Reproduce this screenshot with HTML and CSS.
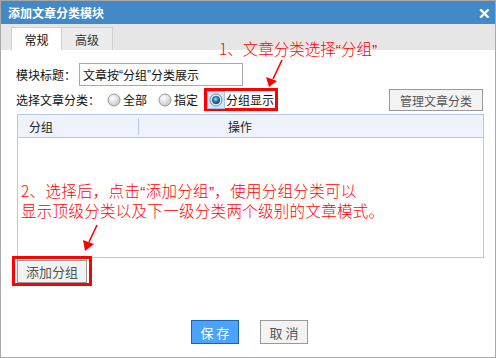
FILE: index.html
```html
<!DOCTYPE html>
<html lang="zh">
<head>
<meta charset="utf-8">
<title>添加文章分类模块</title>
<link rel="stylesheet" href="styles.css">
</head>
<body>
<div class="dialog">
  <div class="titlebar">
    <span class="title">添加文章分类模块</span>
    <span class="close">✕</span>
  </div>
  <div class="tabs">
    <div class="tab active">常规</div>
    <div class="tab">高级</div>
  </div>
  <div class="content">
    <div class="row row-title">
      <span class="label">模块标题：</span>
      <div class="input">文章按<span class="q">“</span>分组<span class="q">”</span>分类展示</div>
    </div>
    <div class="row row-cat">
      <span class="label">选择文章分类：</span>
      <span class="radio"><svg width="14" height="14" viewBox="0 0 14 14"><defs><radialGradient id="rg" cx="0.4" cy="0.35" r="0.7"><stop offset="0" stop-color="#ffffff"/><stop offset="1" stop-color="#c4c4c4"/></radialGradient></defs><circle cx="7" cy="7" r="6" fill="url(#rg)" stroke="#9a9a9a"/></svg>全部</span>
      <span class="radio"><svg width="14" height="14" viewBox="0 0 14 14"><circle cx="7" cy="7" r="6" fill="url(#rg)" stroke="#9a9a9a"/></svg>指定</span>
      <span class="mark-box radio-box"><span class="radio checked"><span class="focus"><svg width="14" height="14" viewBox="0 0 14 14"><defs><radialGradient id="rb" cx="0.45" cy="0.4" r="0.6"><stop offset="0" stop-color="#bfe6ff"/><stop offset="0.45" stop-color="#2f83c4"/><stop offset="1" stop-color="#0b3f6e"/></radialGradient></defs><circle cx="7" cy="7" r="6" fill="#dfe9f3" stroke="#6b8fb0"/><circle cx="7" cy="7" r="4" fill="url(#rb)"/></svg></span>分组显示</span></span>
      <span class="spacer"></span>
      <span class="btn btn-gray btn-manage">管理文章分类</span>
    </div>
    <div class="grid">
      <div class="grid-head">
        <span class="col col1">分组</span>
        <span class="divider"></span>
        <span class="col col2">操作</span>
      </div>
      <div class="grid-body"></div>
    </div>
    <div class="mark-box add-box"><span class="btn btn-gray btn-add">添加分组</span></div>
    <div class="footer">
      <span class="btn btn-blue">保 存</span>
      <span class="btn btn-gray btn-cancel">取 消</span>
    </div>
  </div>

  <div class="note note1">1、文章分类选择<span class="q">“</span>分组<span class="q">”</span></div>
  <div class="note note2">2、选择后，点击<span class="q">“</span>添加分组<span class="q">”</span>，使用分组分类可以<br>显示顶级分类以及下一级分类两个级别的文章模式。</div>
  <svg class="arrows" width="496" height="358" viewBox="0 0 496 358">
    <line x1="282" y1="60" x2="273" y2="79" stroke="#ff0000" stroke-width="1.6"/>
    <polygon points="269,87 266,77 277,81" fill="#ff0000"/>
    <line x1="97" y1="225" x2="89" y2="242" stroke="#ff0000" stroke-width="1.6"/>
    <polygon points="85,251 83,240 94,244" fill="#ff0000"/>
  </svg>
</div>
</body>
</html>
```
FILE: styles.css
```css
* { box-sizing: border-box; }
html, body { margin: 0; padding: 0; background: #fff; }
body { font-family: "Noto Sans CJK SC", "Noto Sans", sans-serif; font-size: 12px; color: #111; }

.q { font-family: "Liberation Sans", sans-serif; }

.dialog {
  position: relative;
  width: 496px;
  height: 358px;
  border: 1px solid #a8a8a8;
  background: #fff;
  overflow: hidden;
}
.titlebar {
  height: 23px;
  background: #4389c7;
  color: #fff;
  display: flex;
  align-items: center;
  justify-content: space-between;
  padding: 0 4px 0 7px;
}
.title { font-weight: bold; font-size: 12px; }
.close { font-size: 15px; font-weight: bold; line-height: 1; }

.tabs {
  height: 26px;
  background: #e6e6e6;
  display: flex;
  align-items: flex-end;
  padding-left: 10px;
}
.tab {
  width: 51px;
  height: 23px;
  display: flex;
  align-items: center;
  justify-content: center;
  background: #ececec;
  border: 1px solid #cfcfcf;
  border-bottom: none;
  color: #333;
  font-size: 12px;
}
.tab.active { background: #fff; color: #111; }
.tab + .tab { border-left: none; }

.content {
  padding: 13px 12px 0 15px;
  display: flex;
  flex-direction: column;
}
.row { display: flex; align-items: center; }
.row-title { height: 23px; }
.label { white-space: nowrap; }
.input {
  width: 164px;
  height: 23px;
  margin-left: 3px;
  border: 1px solid #a9a9a9;
  display: flex;
  align-items: center;
  padding-left: 3px;
  font-size: 12px;
  white-space: nowrap;
}
.row-cat { height: 23px; margin-top: 2px; }
.radio { display: flex; align-items: center; gap: 2px; margin-left: 7px; white-space: nowrap; }
.radio svg { display: block; }
.radio + .radio { margin-left: 11px; }
.mark-box { border: 3px solid #ff0000; }
.radio-box {
  height: 23px;
  width: 74px;
  margin-left: 6px;
  display: flex;
  align-items: center;
}
.radio.checked { margin-left: 0; gap: 1px; }
.focus { display: flex; padding: 1px; background: #d4e6f7; border: 1px solid #a7c6e4; }
.spacer { flex: 1; }

.btn {
  display: inline-flex;
  align-items: center;
  justify-content: center;
  border: 1px solid #9a9a9a;
  white-space: nowrap;
}
.btn-gray { background: #f3f3f3; color: #555; }
.btn-manage { width: 94px; height: 22px; font-size: 12px; margin-top: 1px; }

.grid {
  margin-top: 3px;
  margin-left: 1px;
  width: 467px;
  height: 144px;
  border: 1px solid #b7c8ea;
  display: flex;
  flex-direction: column;
}
.grid-head {
  height: 23px;
  background: #eef3fd;
  border-bottom: 1px solid #b7c8ea;
  display: flex;
  align-items: center;
  color: #222;
}
.col1 { width: 120px; padding-left: 11px; }
.divider { width: 1px; height: 17px; background: #b7c8ea; }
.col2 { padding-left: 89px; }
.grid-body { flex: 1; }

.add-box {
  margin-top: -2px;
  margin-left: -4px;
  width: 80px;
  height: 30px;
  display: flex;
  align-items: center;
  justify-content: center;
  background: #fff;
  position: relative;
  z-index: 1;
}
.btn-add { width: 70px; height: 23px; font-size: 13px; }

.footer {
  margin-top: 34px;
  display: flex;
  gap: 21px;
  padding-left: 175px;
}
.footer .btn { width: 48px; height: 24px; font-size: 13px; }
.btn-blue { background: #4ca3fb; border-color: #1a63b4; color: #fff; }

.note {
  position: absolute;
  color: #ff0000;
  font-size: 15.5px;
  line-height: 19px;
  white-space: nowrap;
  font-weight: 300;
}
.note1 { left: 218px; top: 38px; }
.note2 { left: 20px; top: 180px; letter-spacing: 0.3px; }
.arrows { position: absolute; left: -1px; top: -1px; pointer-events: none; }
```
